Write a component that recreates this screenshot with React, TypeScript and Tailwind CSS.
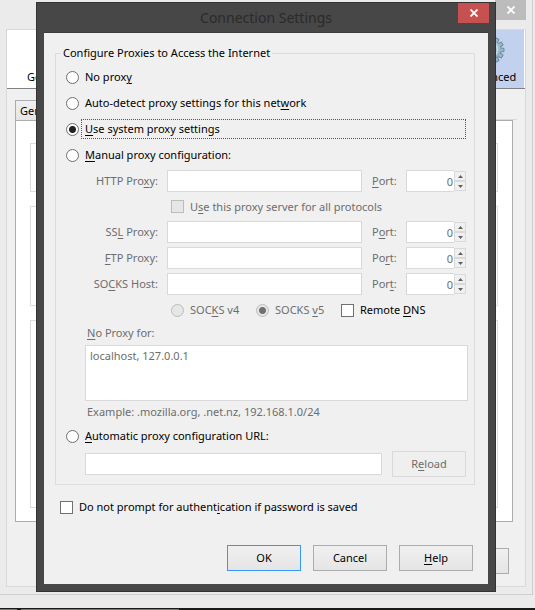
import React from "react";

const radioClass =
  "m-0 size-[13px] shrink-0 appearance-none rounded-full border border-[#6e6e6e] bg-white checked:bg-[radial-gradient(circle,#222_0_3px,transparent_4px)] disabled:border-[#bcbcbc] disabled:bg-[#e6e6e6] disabled:checked:bg-[radial-gradient(circle,#707070_0_3px,transparent_4px)]";
const checkClass =
  "m-0 size-[13px] shrink-0 appearance-none border border-[#707070] bg-white disabled:border-[#bcbcbc] disabled:bg-[#e6e6e6]";
const fieldClass =
  "h-[22px] min-w-0 border border-[#d9d9d9] bg-white px-1 text-[#6d6d6d] outline-none";
const buttonClass =
  "h-[26px] w-[74px] border bg-linear-to-b from-[#f0f0f0] to-[#e5e5e5] text-center";

function Key({ children }: { children: React.ReactNode }) {
  return <span className="underline decoration-1 underline-offset-2">{children}</span>;
}

function Cross({ className }: { className: string }) {
  return (
    <svg viewBox="0 0 8 8" className={className} fill="none" stroke="currentColor" strokeWidth="1.8" aria-hidden="true">
      <path d="M0.5 0.5 7.5 7.5M7.5 0.5 0.5 7.5" />
    </svg>
  );
}

function Gear() {
  const teeth = [0, 30, 60, 90, 120, 150, 180, 210, 240, 270, 300, 330];
  return (
    <svg viewBox="0 0 32 32" className="size-8" aria-hidden="true">
      <defs>
        <linearGradient id="steel" x1="0" y1="0" x2="0" y2="1">
          <stop offset="0" stopColor="#b9d0de" />
          <stop offset="1" stopColor="#86a5ba" />
        </linearGradient>
      </defs>
      <g fill="#9bb7c9" stroke="#6b8aa3" strokeWidth="1">
        {teeth.map((angle) => (
          <path key={angle} d="M13.8 7.5 14.4 3h3.2l0.6 4.5z" transform={`rotate(${angle} 16 16)`} />
        ))}
      </g>
      <circle cx="16" cy="16" r="9.3" fill="url(#steel)" />
      <circle cx="16" cy="16" r="6.5" fill="none" stroke="#c9dce6" strokeWidth="1.5" />
      <circle cx="16" cy="16" r="4" fill="#c2d2ee" stroke="#6b8aa3" />
    </svg>
  );
}

function Choice({ id, checked, children }: { id: string; checked?: boolean; children: React.ReactNode }) {
  return (
    <div className="flex h-[26px] items-center pl-[10px] pr-2">
      <input id={id} type="radio" name="proxy" defaultChecked={checked} className={radioClass} />
      <label
        htmlFor={id}
        className={
          checked
            ? "ml-[2px] h-5 flex-1 border border-dotted border-[#555] pl-[3px] leading-[18px]"
            : "ml-[6px] leading-[18px]"
        }
      >
        {children}
      </label>
    </div>
  );
}

function ProxyRow({ id, label, port }: { id: string; label: React.ReactNode; port: React.ReactNode }) {
  return (
    <div className="flex h-[22px] items-center pl-[29px] pr-2 text-[#6d6d6d]">
      <label htmlFor={id} className="w-[73px] text-right">{label}</label>
      <input id={id} type="text" disabled className={`${fieldClass} ml-[9px] flex-1`} />
      <label htmlFor={`${id}-port`} className="ml-[10px] w-[34px]">{port}</label>
      <div className="flex w-[60px] items-center">
        <input
          id={`${id}-port`}
          type="text"
          defaultValue="0"
          disabled
          className="h-[22px] w-12 border border-r-0 border-[#d9d9d9] bg-white pr-px text-right"
        />
        <div className="flex w-3 flex-col">
          <button type="button" disabled aria-label="Increase" className="flex h-[10px] items-center justify-center border border-[#d9d9d9] bg-[#f0f0f0]">
            <svg viewBox="0 0 5 3" className="h-[3px] w-[5px] shrink-0" fill="#606060"><path d="M0 3 2.5 0 5 3z" /></svg>
          </button>
          <button type="button" disabled aria-label="Decrease" className="flex h-[10px] items-center justify-center border border-[#d9d9d9] bg-[#f0f0f0]">
            <svg viewBox="0 0 5 3" className="h-[3px] w-[5px] shrink-0" fill="#606060"><path d="M0 0 2.5 3 5 0z" /></svg>
          </button>
        </div>
      </div>
    </div>
  );
}

function OptionsWindow() {
  return (
    <div className="flex flex-1 flex-col pr-[2px]">
      <div className="flex flex-1 flex-col border-r border-b border-[#cfcfcf] bg-[#ebebeb] pr-[6px] pb-[7px] pl-[6px]">
        <div className="flex h-[29px] items-start justify-end">
          <button type="button" aria-label="Close options" className="flex h-5 w-[31px] items-center justify-center bg-[#bcbcbc] text-white">
            <Cross className="size-2" />
          </button>
        </div>
        <div className="flex flex-1 flex-col border border-[#d9d9d9] bg-[#f0f0f0]">
          <div className="flex h-[59px] justify-between border-b border-[#808080] bg-white pr-px">
            <button type="button" className="flex flex-col justify-end pb-[3px] pl-5 leading-4">General</button>
            <button type="button" className="flex w-[66px] flex-col items-center justify-between bg-[#c2d2ee] pt-1 pb-[3px] leading-4">
              <Gear />
              Advanced
            </button>
          </div>
          <div className="mt-[11px] flex px-2">
            <button type="button" className="h-5 border border-b-0 border-[#acacac] bg-linear-to-b from-[#f0f0f0] to-[#e5e5e5] px-1">General</button>
            <div className="flex-1 border-b border-[#d9d9d9]" />
          </div>
          <div className="mr-3 ml-2 flex h-[402px] flex-col gap-[14px] border border-[#acacac] bg-white px-[14px] pt-[22px] pb-[13px]">
            <div className="h-[49px] border border-[#dcdcdc]" />
            <div className="h-[100px] border border-[#dcdcdc]" />
            <div className="flex-1 border border-[#dcdcdc]" />
          </div>
          <div className="flex justify-end pt-[26px] pr-4">
            <button type="button" aria-label="Options help" className={`${buttonClass} border-[#acacac]`} />
          </div>
        </div>
      </div>
    </div>
  );
}

function ConnectionDialog() {
  return (
    <div
      role="dialog"
      aria-labelledby="dialog-title"
      className="absolute top-[2px] right-[39px] left-[36px] border border-[#333] bg-[#474747] px-[7px] pb-[7px]"
    >
      <div className="relative flex h-[30px] items-center justify-center border-b border-[#3c3c3c]">
        <h1 id="dialog-title" className="text-[14px] text-[#2a2a2a]">Connection Settings</h1>
        <button type="button" aria-label="Close" className="absolute top-0 -right-px flex h-5 w-[31px] items-center justify-center bg-[#c75050] text-white">
          <Cross className="size-2" />
        </button>
      </div>
      <form className="bg-[#f0f0f0] px-[11px] pt-[11px] pb-[13px]">
        <fieldset className="mr-[2px] border border-[#dcdcdc] pb-[7px]">
          <legend className="ml-[5px] h-[18px] px-[2px] leading-[18px]">Configure Proxies to Access the Internet</legend>
          <div className="pt-[2px]">
            <Choice id="none">No prox<Key>y</Key></Choice>
            <Choice id="detect">Auto-detect proxy settings for this net<Key>w</Key>ork</Choice>
            <Choice id="system" checked><Key>U</Key>se system proxy settings</Choice>
            <Choice id="manual"><Key>M</Key>anual proxy configuration:</Choice>
          </div>
          <div className="mt-[2px]">
            <ProxyRow id="http" label={<>HTTP Pro<Key>x</Key>y:</>} port={<><Key>P</Key>ort:</>} />
            <div className="flex h-[29px] items-center gap-[6px] pl-[115px] text-[#6d6d6d]">
              <input id="share" type="checkbox" disabled className={checkClass} />
              <label htmlFor="share">U<Key>s</Key>e this proxy server for all protocols</label>
            </div>
            <div className="flex flex-col gap-1">
              <ProxyRow id="ssl" label={<>SS<Key>L</Key> Proxy:</>} port={<>P<Key>o</Key>rt:</>} />
              <ProxyRow id="ftp" label={<><Key>F</Key>TP Proxy:</>} port={<>Po<Key>r</Key>t:</>} />
              <ProxyRow id="socks" label={<>SO<Key>C</Key>KS Host:</>} port={<>Por<Key>t</Key>:</>} />
            </div>
            <div className="flex h-[30px] items-center pl-[115px] text-[#6d6d6d]">
              <div className="flex w-[85px] items-center gap-[6px]">
                <input id="v4" type="radio" name="socks-version" disabled className={radioClass} />
                <label htmlFor="v4">SOC<Key>K</Key>S v4</label>
              </div>
              <div className="flex w-[85px] items-center gap-[6px]">
                <input id="v5" type="radio" name="socks-version" disabled defaultChecked className={radioClass} />
                <label htmlFor="v5">SOCKS <Key>v</Key>5</label>
              </div>
              <div className="flex items-center gap-[6px] text-black">
                <input id="dns" type="checkbox" className={checkClass} />
                <label htmlFor="dns">Remote <Key>D</Key>NS</label>
              </div>
            </div>
          </div>
          <div className="flex flex-col pr-[6px] pl-[29px] text-[#6d6d6d]">
            <label htmlFor="exceptions" className="h-5 pl-[2px] leading-4"><Key>N</Key>o Proxy for:</label>
            <textarea
              id="exceptions"
              disabled
              defaultValue="localhost, 127.0.0.1"
              className="h-14 resize-none border border-[#d9d9d9] bg-white px-1 py-[2px] leading-4"
            />
            <p className="h-[22px] pl-[2px] leading-[22px]">Example: .mozilla.org, .net.nz, 192.168.1.0/24</p>
          </div>
          <Choice id="auto"><Key>A</Key>utomatic proxy configuration URL:</Choice>
          <div className="mt-[2px] flex items-center gap-[10px] pr-2 pl-[29px] text-[#6d6d6d]">
            <input type="text" aria-label="Automatic proxy configuration URL" disabled className={`${fieldClass} flex-1`} />
            <button type="button" disabled className="h-[26px] w-[74px] border border-[#d9d9d9] bg-[#efefef]">R<Key>e</Key>load</button>
          </div>
        </fieldset>
        <div className="mt-[14px] flex items-center gap-[6px] pl-[5px]">
          <input id="prompt" type="checkbox" className={checkClass} />
          <label htmlFor="prompt" className="leading-4">Do not prompt for authent<Key>i</Key>cation if password is saved</label>
        </div>
        <div className="mt-[30px] flex justify-end gap-3 pr-1">
          <button type="button" className={`${buttonClass} border-[#3399ff]`}>OK</button>
          <button type="button" className={`${buttonClass} border-[#acacac]`}>Cancel</button>
          <button type="button" className={`${buttonClass} border-[#acacac]`}><Key>H</Key>elp</button>
        </div>
      </form>
    </div>
  );
}

export default function App() {
  return (
    <main className="relative flex min-h-screen flex-col overflow-hidden bg-[#ebebeb] font-['Noto_Sans','Open_Sans',sans-serif] text-[11px] leading-4 text-black">
      <OptionsWindow />
      <div className="h-[13px]" />
      <div className="flex h-[2px] items-end gap-1 bg-[#1a1a1a]">
        <div className="h-px w-[17px] bg-[#777]" />
        <div className="h-px w-[158px] bg-[#777]" />
      </div>
      <ConnectionDialog />
    </main>
  );
}
